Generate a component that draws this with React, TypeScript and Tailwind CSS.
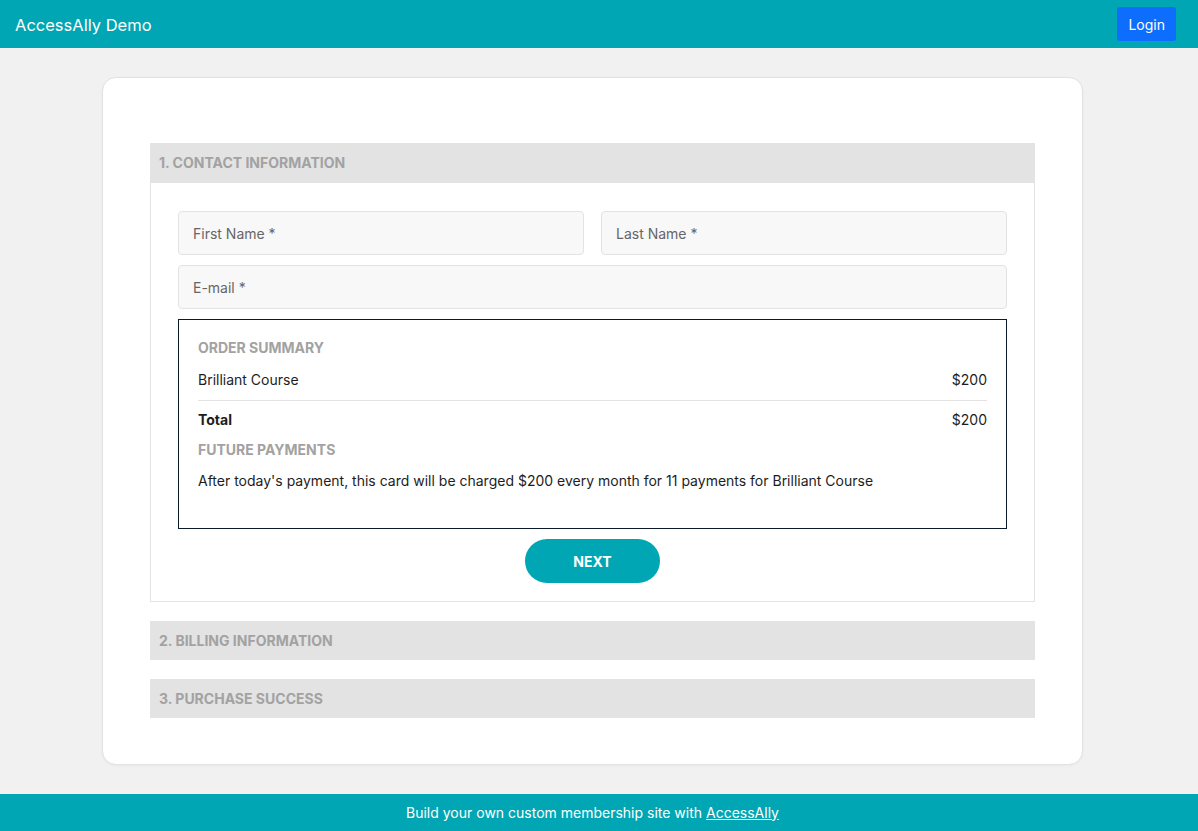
const inputClass =
    "h-[44px] w-full rounded-[4px] border border-[#e3e3e3] bg-[#f8f8f8] px-[14px] text-[14px] text-[#333] placeholder:text-[#666] focus:outline-none";

const StepHeader = ({ label, tall }: { label: string; tall?: boolean }) => (
    <div
        className={`flex ${tall ? "h-[40px]" : "h-[39px]"} items-center bg-[#e3e3e3] px-[9px] text-[14px] font-bold uppercase leading-[20px] text-[#a2a2a2]`}
    >
        {label}
    </div>
);

export default function App() {
    return (
        <div className="flex min-h-screen flex-col bg-[#f1f1f1] font-['Inter',sans-serif] text-[#1d1d1d]">
            {/* Top bar */}
            <header className="flex h-[48px] shrink-0 items-center justify-between bg-[#00a6b3] pl-[15px] pr-[22px]">
                <span className="pt-[3px] text-[16.5px] text-white">AccessAlly Demo</span>
                <button className="h-[34px] rounded-[3px] bg-[#0d6efd] px-[11px] text-[14px] text-white">
                    Login
                </button>
            </header>

            <main className="flex flex-1 justify-center pt-[29px] pr-[13px] pb-[29px]">
                <div className="w-[981px] rounded-[14px] border border-[#e2e2e2] bg-white px-[47px] pt-[65px] pb-[46px] shadow-[0_1px_3px_rgba(0,0,0,0.04)]">
                    <div className="flex flex-col gap-[19px]">
                        {/* Step 1 */}
                        <div>
                            <StepHeader label="1. Contact Information" tall />
                            <div className="flex flex-col gap-[10px] border border-t-0 border-[#e3e3e3] px-[27px] pt-[28px] pb-[18px]">
                                <div className="grid grid-cols-2 gap-[17px]">
                                    <input className={inputClass} placeholder="First Name *" />
                                    <input className={inputClass} placeholder="Last Name *" />
                                </div>
                                <input className={inputClass} placeholder="E-mail *" />

                                {/* Order summary */}
                                <div className="border border-[#0b1a2b] px-[19px] pt-[18px] pb-[37px] text-[14px] leading-[20px]">
                                    <div className="font-bold uppercase text-[#a2a2a2]">Order Summary</div>
                                    <div className="mt-[12px] flex justify-between border-b border-[#e3e3e3] pb-[10px]">
                                        <span>Brilliant Course</span>
                                        <span>$200</span>
                                    </div>
                                    <div className="mt-[9px] flex justify-between">
                                        <span className="font-bold">Total</span>
                                        <span>$200</span>
                                    </div>
                                    <div className="mt-[10px] font-bold uppercase text-[#a2a2a2]">Future Payments</div>
                                    <p className="mt-[11px]">
                                        After today's payment, this card will be charged $200 every month for 11 payments for Brilliant Course
                                    </p>
                                </div>

                                <div className="flex justify-center">
                                    <button className="h-[44px] w-[135px] rounded-full bg-[#00a6b3] text-[14px] font-bold uppercase text-white">
                                        Next
                                    </button>
                                </div>
                            </div>
                        </div>

                        {/* Step 2 */}
                        <StepHeader label="2. Billing Information" />

                        {/* Step 3 */}
                        <StepHeader label="3. Purchase Success" />
                    </div>
                </div>
            </main>

            {/* Footer */}
            <footer className="flex h-[37px] shrink-0 items-center justify-center bg-[#00a6b3] pr-[13px] text-[14px] leading-[20px] text-white">
                <span>
                    Build your own custom membership site with{" "}
                    <a href="#" className="underline">AccessAlly</a>
                </span>
            </footer>
        </div>
    );
}
